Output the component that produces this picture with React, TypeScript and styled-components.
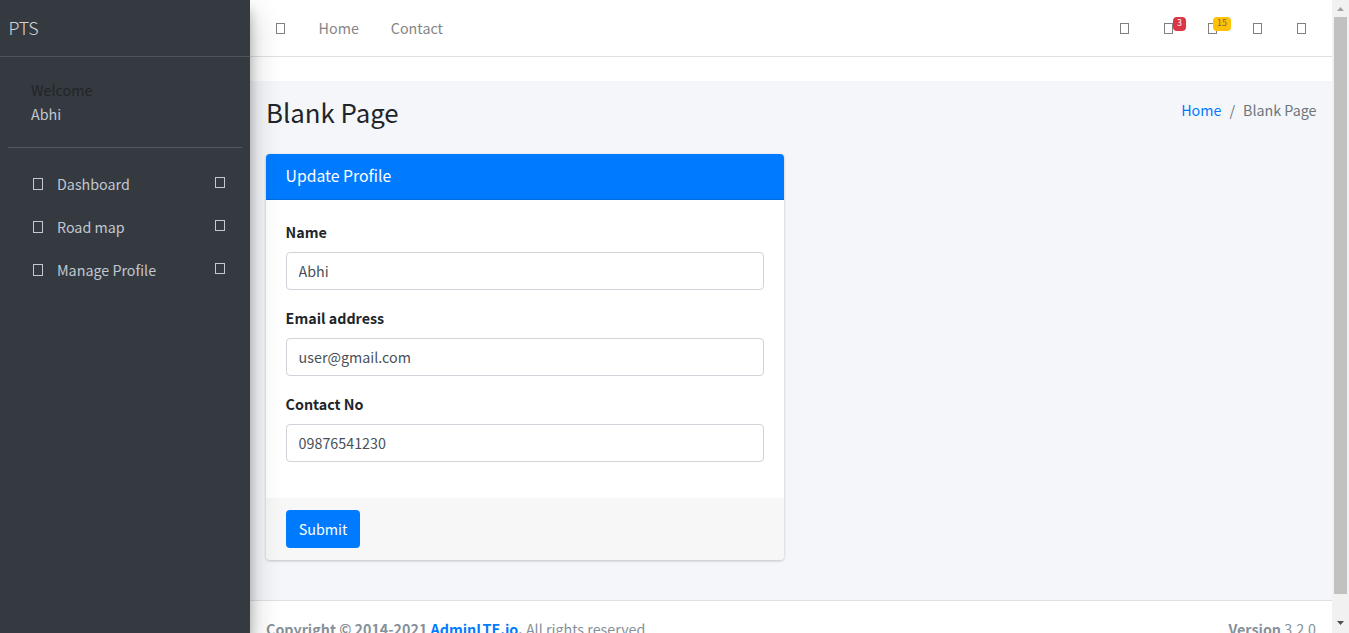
import React from "react";
import styled, { createGlobalStyle } from "styled-components";

const GlobalStyle = createGlobalStyle`
  *, *::before, *::after { box-sizing: border-box; }
  html, body { margin: 0; height: 100%; overflow: hidden; }
  body {
    font-family: "Noto Sans CJK SC", "Noto Sans", sans-serif;
    font-size: 14.3px;
    line-height: 24px;
    color: #212529;
    background: #fff;
  }
  a { text-decoration: none; color: #007bff; }
`;

const Shell = styled.div`
  display: grid;
  grid-template-columns: 250px 1fr 17px;
  height: 633px;
  overflow: hidden;
`;

const Sidebar = styled.aside`
  position: relative;
  z-index: 2;
  background: #343a40;
  color: #c2c7d0;
  box-shadow: 0 14px 28px rgba(0, 0, 0, 0.25), 0 10px 10px rgba(0, 0, 0, 0.22);
`;

const Brand = styled.div`
  height: 57px;
  padding: 15px 8.4px;
  border-bottom: 1px solid #4b545c;
  font-size: 17.9px;
  font-weight: 300;
  color: rgba(255, 255, 255, 0.8);
`;

const UserPanel = styled.div`
  margin: 0 8px;
  height: 91px;
  padding: 21px 0 0 23px;
  border-bottom: 1px solid #4f5962;
`;

const Welcome = styled.div`
  color: #212529;
`;

const UserName = styled.div`
  color: #c2c7d0;
`;

const Menu = styled.nav`
  padding: 15px 25px 0 33px;
`;

const MenuItem = styled.div`
  display: flex;
  align-items: center;
  height: 43.2px;
`;

const MenuLabel = styled.span`
  flex: 1;
  margin: 0 0 2px 14px;
`;

const Glyph = styled.i<{ $w?: number; $h?: number; $up?: number }>`
  display: block;
  flex: none;
  width: ${(p) => p.$w ?? 9}px;
  height: ${(p) => p.$h ?? 11}px;
  margin-bottom: ${(p) => p.$up ?? 0}px;
  border: 1px solid currentColor;
`;

const Main = styled.div`
  display: flex;
  flex-direction: column;
  min-width: 0;
  height: 633px;
  overflow: hidden;
  background: #fff;
`;

const Navbar = styled.header`
  display: flex;
  flex: none;
  align-items: center;
  height: 57px;
  padding: 0 26px 0 26px;
  border-bottom: 1px solid #dee2e6;
  color: #808080;
  margin-bottom: 24px;
`;

const NavLinks = styled.div`
  display: flex;
  align-items: center;
  gap: 32px;
  flex: 1;
`;

const NavText = styled.span`
  position: relative;
  left: 1.6px;
  color: #858585;
`;

const NavIcons = styled.div`
  display: flex;
  gap: 35.3px;
`;

const IconWrap = styled.span`
  position: relative;
`;

const Badge = styled.span<{ $bg: string; $fg: string; $left: number }>`
  position: absolute;
  top: -6px;
  left: ${(p) => p.$left}px;
  height: 14px;
  padding: 0 4px;
  border-radius: 4px;
  background: ${(p) => p.$bg};
  color: ${(p) => p.$fg};
  font-size: 8.8px;
  line-height: 12px;
`;

const Content = styled.main`
  flex: none;
  height: 519px;
  padding: 13px 16px 0;
  background: #f4f6f9;
`;

const PageHeader = styled.div`
  display: flex;
  justify-content: space-between;
  align-items: flex-start;
  height: 60px;
`;

const Title = styled.h1`
  margin: 0;
  font-size: 25.8px;
  font-weight: 400;
  line-height: 35px;
`;

const Breadcrumb = styled.div`
  display: flex;
  gap: 8px;
  margin-right: -0.5px;
  padding-top: 4px;
  color: #6c757d;
`;

const Card = styled.section`
  width: 518px;
  overflow: hidden;
  border-radius: 4px;
  background: #fff;
  box-shadow: 0 0 1px rgba(0, 0, 0, 0.125), 0 1px 3px rgba(0, 0, 0, 0.2);
`;

const CardHeader = styled.h3`
  height: 46px;
  margin: 0;
  padding: 10px 19.6px;
  border-bottom: 1px solid rgba(0, 0, 0, 0.125);
  background: #007bff;
  color: #fff;
  font-size: 15.75px;
  font-weight: 400;
`;

const CardBody = styled.div`
  padding: 20px;
`;

const Field = styled.div`
  margin-bottom: 16px;
`;

const Label = styled.label`
  display: block;
  margin: 0 0 8px -0.4px;
  font-weight: 700;
`;

const Input = styled.input`
  display: block;
  width: 100%;
  height: 38px;
  padding: 5px 11.6px 7px;
  border: 1px solid #ced4da;
  border-radius: 4px;
  background: #fff;
  color: #495057;
  font: inherit;
  outline: none;
`;

const CardFooter = styled.div`
  padding: 12px 20px;
  background: #f7f7f7;
`;

const Submit = styled.button`
  display: block;
  width: 74px;
  height: 38px;
  padding: 0;
  border: 0;
  border-radius: 4px;
  background: #007bff;
  color: #fff;
  font: inherit;
`;

const Footer = styled.footer`
  display: flex;
  flex: none;
  justify-content: space-between;
  height: 57px;
  padding: 16px;
  border-top: 1px solid #dee2e6;
  color: #869099;
`;

const Scrollbar = styled.div`
  display: flex;
  flex-direction: column;
  align-items: center;
  height: 633px;
  background: #f1f1f1;
`;

const ScrollThumb = styled.div`
  width: 13px;
  height: 577px;
  background: #c1c1c1;
`;

const ScrollArrow = styled.svg`
  display: block;
  width: 17px;
  height: 17px;

  &:last-child {
    margin-top: 22px;
  }
`;

const menu = ["Dashboard", "Road map", "Manage Profile"];
const fields = [
  ["Name", "Abhi"],
  ["Email address", "user@gmail.com"],
  ["Contact No", "09876541230"],
];

export default function App() {
  return (
    <>
      <GlobalStyle />
      <Shell>
        <Sidebar>
          <Brand>PTS</Brand>
          <UserPanel>
            <Welcome>Welcome</Welcome>
            <UserName>Abhi</UserName>
          </UserPanel>
          <Menu>
            {menu.map((m) => (
              <MenuItem key={m}>
                <Glyph $w={10} $h={12} $up={1} />
                <MenuLabel>{m}</MenuLabel>
                <Glyph $w={10} $up={4} />
              </MenuItem>
            ))}
          </Menu>
        </Sidebar>
        <Main>
          <Navbar>
            <NavLinks>
              <Glyph />
              <NavText>Home</NavText>
              <NavText>Contact</NavText>
            </NavLinks>
            <NavIcons>
              <Glyph />
              <IconWrap>
                <Glyph />
                <Badge $bg="#dc3545" $fg="#fff" $left={9}>3</Badge>
              </IconWrap>
              <IconWrap>
                <Glyph />
                <Badge $bg="#ffc107" $fg="#7d6a35" $left={4.7}>15</Badge>
              </IconWrap>
              <Glyph />
              <Glyph />
            </NavIcons>
          </Navbar>
          <Content>
            <PageHeader>
              <Title>Blank Page</Title>
              <Breadcrumb>
                <a href="#">Home</a>
                <span>/</span>
                <span>Blank Page</span>
              </Breadcrumb>
            </PageHeader>
            <Card>
              <CardHeader>Update Profile</CardHeader>
              <CardBody>
                {fields.map(([label, value]) => (
                  <Field key={label}>
                    <Label>{label}</Label>
                    <Input defaultValue={value} />
                  </Field>
                ))}
              </CardBody>
              <CardFooter>
                <Submit>Submit</Submit>
              </CardFooter>
            </Card>
          </Content>
          <Footer>
            <span>
              <b>
                Copyright © 2014-2021 <a href="#">AdminLTE.io</a>.
              </b>{" "}
              All rights reserved.
            </span>
            <span>
              <b>Version</b> 3.2.0
            </span>
          </Footer>
        </Main>
        <Scrollbar>
          <ScrollArrow viewBox="0 0 17 17">
            <path d="M5 11 L8.5 7 L12 11 Z" fill="#a3a3a3" />
          </ScrollArrow>
          <ScrollThumb />
          <ScrollArrow viewBox="0 0 17 17">
            <path d="M5 5 L12 5 L8.5 9 Z" fill="#505050" />
          </ScrollArrow>
        </Scrollbar>
      </Shell>
    </>
  );
}
